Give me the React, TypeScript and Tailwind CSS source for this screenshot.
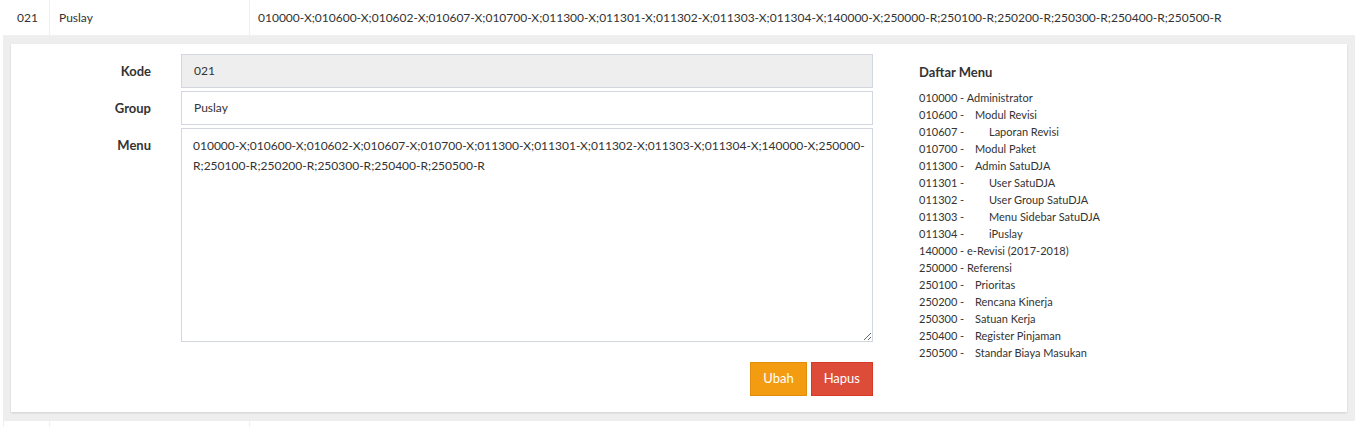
import React from "react";

const menuValue =
  "010000-X;010600-X;010602-X;010607-X;010700-X;011300-X;011301-X;011302-X;011303-X;011304-X;140000-X;250000-R;250100-R;250200-R;250300-R;250400-R;250500-R";

const daftar = [
  { code: "010000", name: "Administrator", level: 0 },
  { code: "010600", name: "Modul Revisi", level: 1 },
  { code: "010607", name: "Laporan Revisi", level: 2 },
  { code: "010700", name: "Modul Paket", level: 1 },
  { code: "011300", name: "Admin SatuDJA", level: 1 },
  { code: "011301", name: "User SatuDJA", level: 2 },
  { code: "011302", name: "User Group SatuDJA", level: 2 },
  { code: "011303", name: "Menu Sidebar SatuDJA", level: 2 },
  { code: "011304", name: "iPuslay", level: 2 },
  { code: "140000", name: "e-Revisi (2017-2018)", level: 0 },
  { code: "250000", name: "Referensi", level: 0 },
  { code: "250100", name: "Prioritas", level: 1 },
  { code: "250200", name: "Rencana Kinerja", level: 1 },
  { code: "250300", name: "Satuan Kerja", level: 1 },
  { code: "250400", name: "Register Pinjaman", level: 1 },
  { code: "250500", name: "Standar Biaya Masukan", level: 1 },
];

function FieldLabel({ children }: { children: React.ReactNode }) {
  return (
    <div className="w-[170px] shrink-0 pr-[30px] pt-[8px] text-right font-bold text-[13px] leading-[18px] text-[#333]">
      {children}
    </div>
  );
}

export default function App() {
  return (
    <div
      className="w-[1364px] h-[427px] overflow-hidden bg-white text-[12px] text-[#333]"
      style={{ fontFamily: "Lato, 'Open Sans', sans-serif" }}
    >
      {/* table row */}
      <div className="flex h-[36px] ml-[3px] w-[1352px] border-b border-[#f0f0f0]">
        <div className="w-[47px] pl-[14px] flex items-center border-r border-[#f0f0f0]">021</div>
        <div className="w-[200px] pl-[9px] flex items-center border-r border-[#f0f0f0]">Puslay</div>
        <div className="flex-1 pl-[8px] flex items-center whitespace-nowrap">{menuValue}</div>
      </div>

      {/* detail area */}
      <div className="ml-[3px] w-[1352px] h-[385px] bg-[#eeeeee] pt-[8px] px-[8px]">
        <div className="bg-white h-[368px] shadow-[0_1px_2px_rgba(0,0,0,0.12)] flex pt-[10px]">
          <div className="w-[862px] shrink-0">
            <div className="flex mb-[3px]">
              <FieldLabel>Kode</FieldLabel>
              <div className="w-[692px] h-[34px] bg-[#eeeeee] border border-[#d2d6de] px-[12px] flex items-center">
                021
              </div>
            </div>
            <div className="flex mb-[3px]">
              <FieldLabel>Group</FieldLabel>
              <div className="w-[692px] h-[34px] bg-white border border-[#d2d6de] px-[12px] flex items-center">
                Puslay
              </div>
            </div>
            <div className="flex">
              <FieldLabel>Menu</FieldLabel>
              <textarea
                readOnly
                value={menuValue}
                className="w-[692px] h-[214px] border border-[#d2d6de] pl-[11px] pr-[2px] py-[7px] text-[12px] leading-[20px] text-[#333] resize-y outline-none"
                style={{ fontFamily: "Lato, 'Open Sans', sans-serif" }}
              />
            </div>
            <div className="flex justify-end gap-[4px] mt-[20px]">
              <button className="h-[34px] px-[12px] bg-[#f39c12] border border-[#e08e0b] text-white text-[13px]">
                Ubah
              </button>
              <button className="h-[34px] px-[12px] bg-[#dd4b39] border border-[#d73925] text-white text-[13px]">
                Hapus
              </button>
            </div>
          </div>
          <div className="pl-[46px] pt-[9px]">
            <div className="font-bold text-[13px] leading-[18px] mb-[8px]">Daftar Menu</div>
            <div className="text-[11px] leading-[17px]">
              {daftar.map((d) => (
                <div key={d.code} className="flex whitespace-nowrap">
                  {d.level === 0 ? (
                    <span>
                      {d.code} - {d.name}
                    </span>
                  ) : (
                    <>
                      <span className={d.level === 1 ? "w-[56px]" : "w-[70px]"}>{d.code} -</span>
                      <span>{d.name}</span>
                    </>
                  )}
                </div>
              ))}
            </div>
          </div>
        </div>
      </div>

      {/* next row */}
      <div className="flex h-[8px] ml-[3px] w-[1352px]">
        <div className="w-[47px] border-r border-l border-[#f0f0f0]" />
        <div className="w-[200px] border-r border-[#f0f0f0]" />
      </div>
    </div>
  );
}
